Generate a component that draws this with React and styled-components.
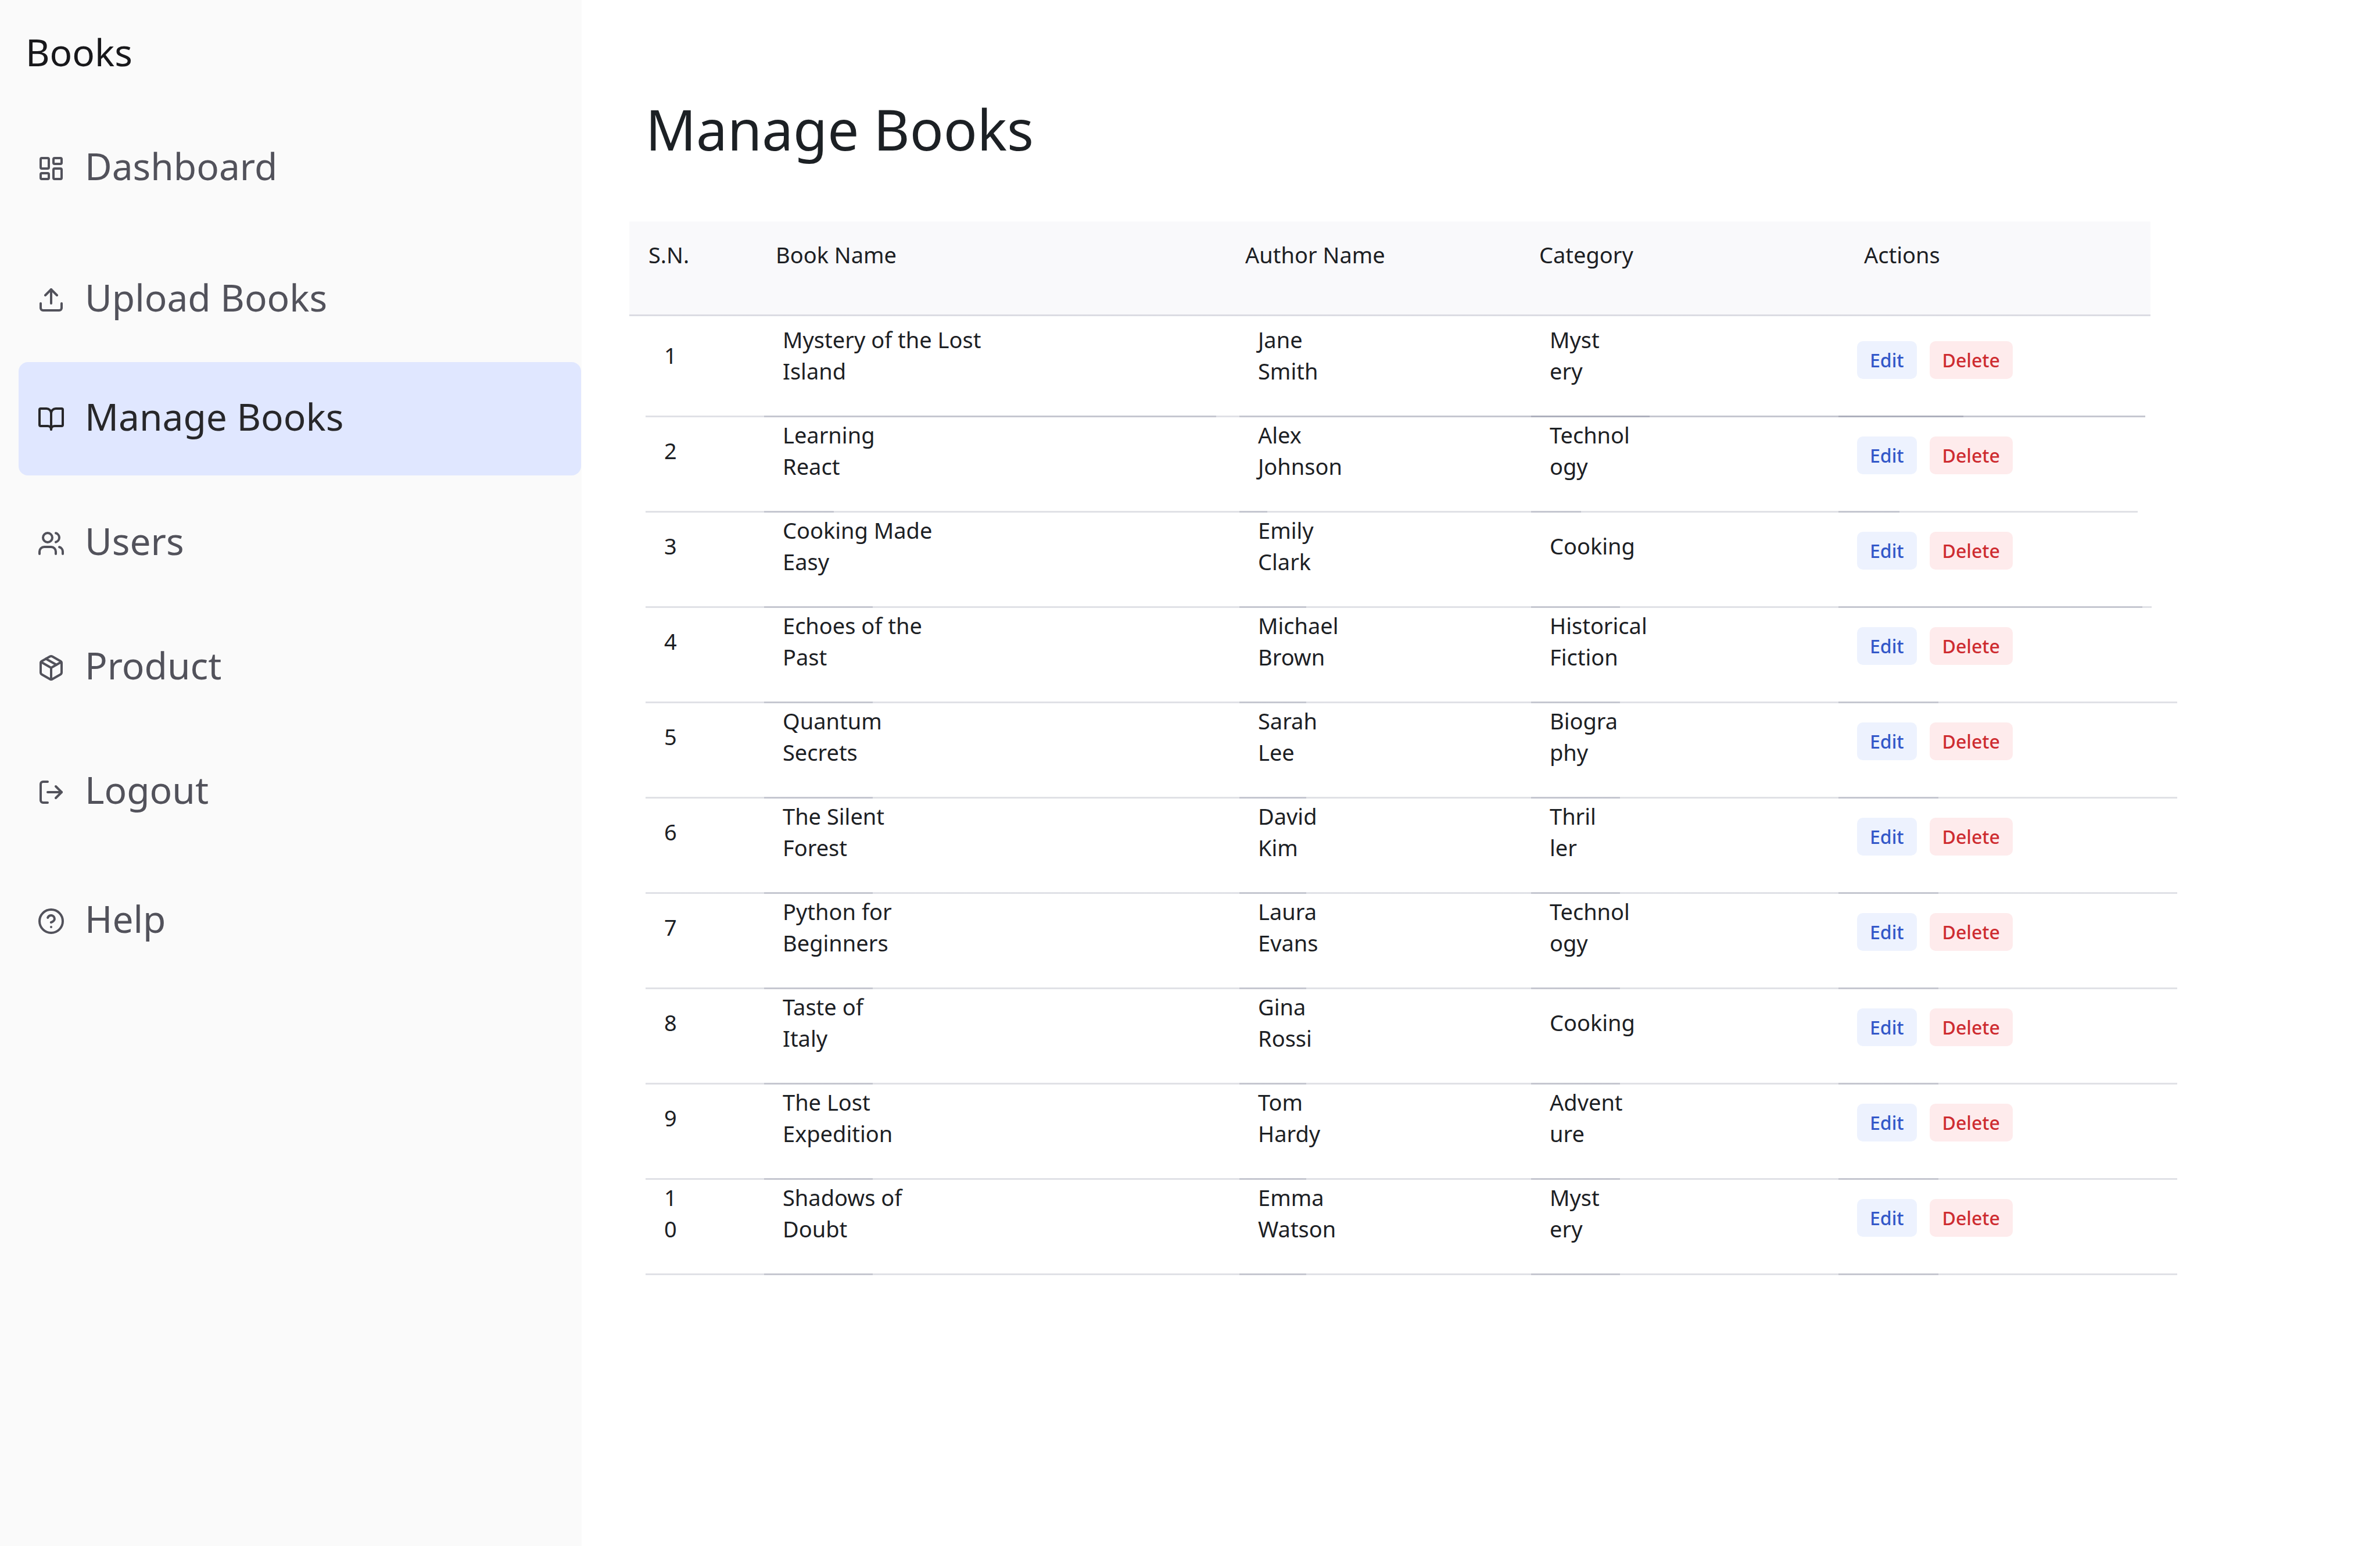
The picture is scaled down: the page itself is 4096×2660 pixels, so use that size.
import React from "react";
import styled, { createGlobalStyle, css } from "styled-components";
import {
  LayoutDashboard,
  Upload,
  BookOpen,
  Users,
  Package,
  LogOut,
  CircleHelp,
} from "lucide-react";

const GlobalStyle = createGlobalStyle`
  *, *::before, *::after { box-sizing: border-box; }
  body {
    margin: 0;
    background: #ffffff;
    color: #1c2024;
    font-family: "Noto Sans", "Open Sans", sans-serif;
  }
`;

const RULE = "#0009321f";

const Page = styled.div`
  display: flex;
  min-height: 100vh;
`;

const Sidebar = styled.aside`
  flex: 0 0 1001px;
  padding: 46px 1px 46px 32px;
  background: #fafafa;
`;

const Brand = styled.div`
  padding: 0 12px;
  color: #18181b;
  font-size: 64px;
  line-height: 88px;
`;

const Nav = styled.nav`
  display: flex;
  flex-direction: column;
  padding-top: 58px;
`;

const NavLink = styled.a`
  display: flex;
  align-items: center;
  gap: 34px;
  height: 195px;
  margin-bottom: ${(p) => p.$gap}px;
  padding: 0 32px;
  border-radius: 16px;
  background: ${(p) => (p.$active ? "#e0e7ff" : "transparent")};
  color: ${(p) => (p.$active ? "#27272a" : "#52525b")};
  font-size: 64px;
  line-height: 88px;
  text-decoration: none;

  svg {
    flex: none;
  }
`;

const NavLabel = styled.span`
  padding-bottom: 8px;
`;

const Main = styled.main`
  flex: 1;
  min-width: 0;
  padding: 157px 349px 157px 82px;
`;

const Title = styled.h1`
  margin: 0 0 94px;
  padding-left: 28px;
  font-size: 96px;
  font-weight: 400;
  line-height: 130px;
`;

const Table = styled.table`
  width: 100%;
  table-layout: fixed;
  border-collapse: collapse;
  font-size: 38px;
  line-height: 54px;
  text-align: left;
`;

const Col = styled.col`
  width: ${(p) => p.$width};
`;

/* Every entry of widths is one translucent rule along the cell's bottom edge;
   rules that share a stretch add up to a darker line. */
const bottomRules = (widths, side = "left") =>
  css`
    background-image: ${widths.map(() => `linear-gradient(${RULE}, ${RULE})`).join(", ")};
    background-size: ${widths.map((w) => `${w} 3px`).join(", ")};
    background-position: ${side} bottom;
    background-repeat: no-repeat;
  `;

const HeadCell = styled.th`
  height: 163px;
  padding: 30px 0 0 ${(p) => p.$inset}px;
  font-weight: 400;
  vertical-align: top;
  background-image: linear-gradient(${RULE}, ${RULE}), linear-gradient(#f9f9fb, #f9f9fb);
  background-size: ${(p) => p.$fill} 3px, ${(p) => p.$fill} 100%;
  background-position: left bottom, left top;
  background-repeat: no-repeat;
`;

const Cell = styled.td`
  padding: 3px 0 53px ${(p) => p.$inset}px;
  vertical-align: middle;
  ${(p) => bottomRules(p.$rules, p.$side)}

  tr:first-child > & {
    padding-top: 13px;
  }
`;

const ActionCell = styled(Cell)`
  padding-top: 20px;

  tr:first-child > & {
    padding-top: 30px;
  }
`;

const Serial = styled.div`
  width: 24px;
  word-break: break-all;
`;

const Actions = styled.div`
  display: flex;
  gap: 22px;
`;

const Button = styled.button`
  height: 65px;
  padding: 0 22px;
  border: 0;
  border-radius: 10px;
  background: ${(p) => (p.$danger ? "#feebec" : "#edf2fe")};
  color: ${(p) => (p.$danger ? "#ce2c31" : "#3358c9")};
  font-family: inherit;
  font-size: 32px;
  font-weight: 500;
  line-height: 44px;
  cursor: pointer;
`;

const navItems = [
  { label: "Dashboard", icon: LayoutDashboard, gap: 31 },
  { label: "Upload Books", icon: Upload, gap: 10 },
  { label: "Manage Books", icon: BookOpen, gap: 19, active: true },
  { label: "Users", icon: Users, gap: 19 },
  { label: "Product", icon: Package, gap: 19 },
  { label: "Logout", icon: LogOut, gap: 27 },
  { label: "Help", icon: CircleHelp, gap: 0 },
];

const full = "100%";
const commonRules = {
  name: [full, "187px"],
  author: [full, "115px"],
  category: [full, "153px"],
  actions: [full, "172px"],
};

const books = [
  {
    name: ["Mystery of the Lost", "Island"],
    author: ["Jane", "Smith"],
    category: ["Myst", "ery"],
    rules: {
      name: [full, "778px"],
      author: [full, full],
      category: [full, full, "204px"],
      actions: ["calc(100% - 55px)", "calc(100% - 55px)", "215px"],
    },
  },
  {
    name: ["Learning", "React"],
    author: ["Alex", "Johnson"],
    category: ["Technol", "ogy"],
    rules: {
      name: [full, "120px"],
      author: [full, "48px"],
      category: [full, "86px"],
      actions: ["calc(100% - 68px)", "105px"],
    },
  },
  {
    name: ["Cooking Made", "Easy"],
    author: ["Emily", "Clark"],
    category: ["Cooking"],
    rules: {
      ...commonRules,
      actions: ["calc(100% - 44px)", "calc(100% - 60px)"],
    },
  },
  { name: ["Echoes of the", "Past"], author: ["Michael", "Brown"], category: ["Historical", "Fiction"] },
  { name: ["Quantum", "Secrets"], author: ["Sarah", "Lee"], category: ["Biogra", "phy"] },
  { name: ["The Silent", "Forest"], author: ["David", "Kim"], category: ["Thril", "ler"] },
  { name: ["Python for", "Beginners"], author: ["Laura", "Evans"], category: ["Technol", "ogy"] },
  { name: ["Taste of", "Italy"], author: ["Gina", "Rossi"], category: ["Cooking"] },
  { name: ["The Lost", "Expedition"], author: ["Tom", "Hardy"], category: ["Advent", "ure"] },
  { name: ["Shadows of", "Doubt"], author: ["Emma", "Watson"], category: ["Myst", "ery"] },
];

function Lines({ lines }) {
  return lines.map((line, i) => (
    <React.Fragment key={line}>
      {i > 0 && <br />}
      {line}
    </React.Fragment>
  ));
}

function BookRow({ number, book }) {
  const rules = book.rules || commonRules;
  return (
    <tr>
      <Cell $inset={60} $rules={["calc(100% - 28px)"]} $side="right">
        <Serial>{number}</Serial>
      </Cell>
      <Cell $inset={32} $rules={rules.name}>
        <Lines lines={book.name} />
      </Cell>
      <Cell $inset={32} $rules={rules.author}>
        <Lines lines={book.author} />
      </Cell>
      <Cell $inset={32} $rules={rules.category}>
        <Lines lines={book.category} />
      </Cell>
      <ActionCell $inset={32} $rules={rules.actions}>
        <Actions>
          <Button type="button">Edit</Button>
          <Button type="button" $danger>
            Delete
          </Button>
        </Actions>
      </ActionCell>
    </tr>
  );
}

export default function App() {
  return (
    <>
      <GlobalStyle />
      <Page>
        <Sidebar>
          <Brand>Books</Brand>
          <Nav>
            {navItems.map(({ label, icon: Icon, gap, active }) => (
              <NavLink
                key={label}
                href="#"
                $gap={gap}
                $active={active}
                aria-current={active ? "page" : undefined}
              >
                <Icon size={48} strokeWidth={2} aria-hidden="true" />
                <NavLabel>{label}</NavLabel>
              </NavLink>
            ))}
          </Nav>
        </Sidebar>
        <Main>
          <Title>Manage Books</Title>
          <Table>
            <colgroup>
              <Col $width="232px" />
              <Col $width="818px" />
              <Col $width="502px" />
              <Col $width="529px" />
              <Col $width="auto" />
            </colgroup>
            <thead>
              <tr>
                <HeadCell $inset={33} $fill="100%">S.N.</HeadCell>
                <HeadCell $inset={20} $fill="100%">Book Name</HeadCell>
                <HeadCell $inset={10} $fill="100%">Author Name</HeadCell>
                <HeadCell $inset={14} $fill="100%">Category</HeadCell>
                <HeadCell $inset={44} $fill="calc(100% - 46px)">Actions</HeadCell>
              </tr>
            </thead>
            <tbody>
              {books.map((book, i) => (
                <BookRow key={i} number={i + 1} book={book} />
              ))}
            </tbody>
          </Table>
        </Main>
      </Page>
    </>
  );
}
